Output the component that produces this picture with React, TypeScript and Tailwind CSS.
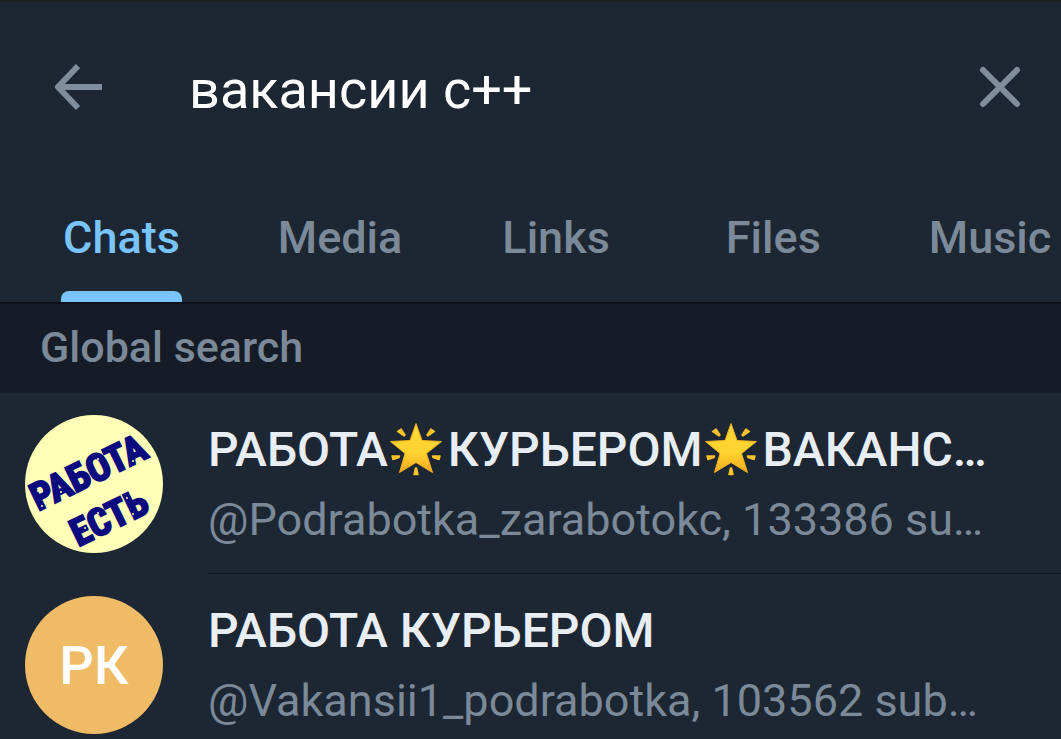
import React, { useState } from 'react';

interface Tab {
  label: string;
  className: string;
}

const tabs: Tab[] = [
  { label: 'Chats', className: 'mr-[94px]' },
  { label: 'Media', className: 'mr-24' },
  { label: 'Links', className: 'mr-28' },
  { label: 'Files', className: 'mr-[104px]' },
  { label: 'Music', className: '' },
];

const BackIcon = () => (
  <svg className="w-12 h-12" viewBox="0 0 48 48" fill="none" stroke="currentColor" strokeWidth="6" strokeLinejoin="round">
    <path d="M24 3L4 24L24 45M4 24H48" />
  </svg>
);

const CloseIcon = () => (
  <svg className="w-12 h-12" viewBox="0 0 48 48" fill="none" stroke="currentColor" strokeWidth="6" strokeLinecap="round">
    <path d="M7 7L41 41M41 7L7 41" />
  </svg>
);

const GlowingStar = () => (
  <svg className="inline-block w-[56px] h-[54px] mx-[2px] align-[-10px]" viewBox="0 0 56 54" role="img" aria-label="glowing star">
    <defs>
      <linearGradient id="star" x1="0" y1="0" x2="0" y2="1">
        <stop offset="0" stopColor="#fdd835" />
        <stop offset="0.6" stopColor="#fdd32f" />
        <stop offset="1" stopColor="#f4a91f" />
      </linearGradient>
    </defs>
    <path
      d="M26 1.500L32 18.500L51.500 19.500L36.500 31.500L42.500 50.500L26 40.500L9.500 50.500L15 31.500L0.500 19.500L20 18.500Z"
      fill="url(#star)"
      stroke="#f2b022"
      strokeWidth="1"
      strokeLinejoin="round"
    />
    <g fill="#f9c22b" stroke="#f9c22b" strokeWidth="1.5" strokeLinejoin="round">
      <path d="M7.500 9.500L11 7L15 13L14 14Z" />
      <path d="M44.500 9.500L41 7L37 13L38 14Z" />
      <path d="M2 34L9.500 34L9 35.500L3 37.500Z" />
      <path d="M50 34L42.500 34L43 35.500L49 37.500Z" />
      <path d="M25.500 46H26.500L28 52.500H24Z" />
    </g>
  </svg>
);

const JobsAvatar = () => (
  <svg className="w-[138px] h-[138px] shrink-0 overflow-visible" viewBox="0 0 138 138" role="img" aria-label="РАБОТА ЕСТЬ">
    <circle cx="69" cy="69" r="69" fill="#ffffb8" />
    <g
      fontFamily="'Liberation Sans Narrow', 'Roboto Condensed', Roboto, sans-serif"
      fontWeight="700"
      fill="#0b0b80"
      stroke="#0b0b80"
      strokeWidth="2"
      textAnchor="middle"
    >
      <text x="69" y="69" fontSize="38" transform="rotate(-26 69 69)">РАБОТА</text>
      <text x="90" y="114" fontSize="38" transform="rotate(-26 90 114)">ЕСТЬ</text>
    </g>
    <g fill="#ffffb8">
      <circle cx="13" cy="76" r="1" />
      <circle cx="17" cy="91" r="1" />
      <circle cx="36" cy="77" r="1" />
      <circle cx="51" cy="57" r="1" />
      <circle cx="73" cy="44" r="1" />
      <circle cx="108" cy="46" r="1" />
      <circle cx="73" cy="98" r="1" />
      <circle cx="60" cy="113" r="1" />
      <circle cx="102" cy="83" r="1" />
      <circle cx="108" cy="99" r="1" />
    </g>
  </svg>
);

interface ResultRowProps {
  avatar: React.ReactNode;
  title: React.ReactNode;
  subtitle: string;
}

const ResultRow: React.FC<ResultRowProps> = ({ avatar, title, subtitle }) => (
  <li className="group">
    <button className="flex w-full pl-[25px] text-left">
      <span className="flex shrink-0 pt-[22px] pb-[21px]">{avatar}</span>
      <span className="ml-[45px] flex-1 min-w-0 pt-[27px] border-b border-[#0f1620] group-last:border-transparent">
        <span className="block truncate text-[48px] leading-[60px] font-medium text-[#e9eef4]">{title}</span>
        <span className="block truncate mt-2.5 text-[45px] leading-[60px] text-[#7b8998]">{subtitle}</span>
      </span>
    </button>
  </li>
);

const App: React.FC = () => {
  const [query, setQuery] = useState('вакансии с++');
  const [active, setActive] = useState('Chats');

  return (
    <div className="min-h-screen overflow-hidden bg-[#1d2733] font-['Roboto',sans-serif] border-t-2 border-[#1a2024]">
      <header className="flex items-center h-[170px] pl-[54px] pr-[37px] text-[#7f8d9c]">
        <button aria-label="Back">
          <BackIcon />
        </button>
        <input
          aria-label="Search"
          className="flex-1 min-w-0 ml-[87px] mt-1.5 bg-transparent text-[54px] leading-[60px] text-white outline-none"
          value={query}
          onChange={(e) => setQuery(e.target.value)}
        />
        <button aria-label="Clear" onClick={() => setQuery('')}>
          <CloseIcon />
        </button>
      </header>

      <nav className="flex h-[132px] pl-[61px] overflow-hidden border-b-2 border-[#0c1119]">
        {tabs.map((tab) => (
          <button
            key={tab.label}
            onClick={() => setActive(tab.label)}
            className={`flex flex-col shrink-0 justify-between pt-[36px] text-[45px] leading-[60px] font-medium ${tab.className} ${
              active === tab.label ? 'text-[#79c4fc]' : 'text-[#7b8998]'
            }`}
          >
            <span className="px-[2px]">{tab.label}</span>
            {active === tab.label && <span className="w-full h-[11px] rounded-t-lg bg-[#79c4fc]" />}
          </button>
        ))}
      </nav>

      <h2 className="h-[89px] pl-10 bg-[#151c27] text-[43px] leading-[86px] font-medium text-[#7b8998] border-b border-[#1a212c]">
        Global search
      </h2>

      <ul>
        <ResultRow
          avatar={<JobsAvatar />}
          title={
            <>
              РАБОТА
              <GlowingStar />
              КУРЬЕРОМ
              <GlowingStar />
              ВАКАНС…
            </>
          }
          subtitle="@Podrabotka_zarabotokc, 133386 su…"
        />
        <ResultRow
          avatar={
            <span className="flex items-center justify-center w-[138px] h-[138px] rounded-full bg-[#f0bb66] text-[54px] font-medium text-white">
              РК
            </span>
          }
          title="РАБОТА КУРЬЕРОМ"
          subtitle="@Vakansii1_podrabotka, 103562 sub…"
        />
      </ul>
    </div>
  );
};

export default App;
